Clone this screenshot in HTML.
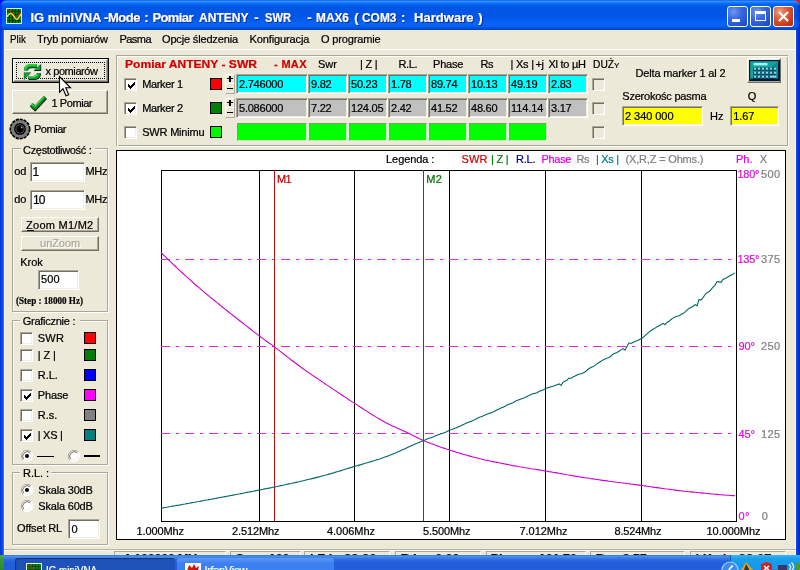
<!DOCTYPE html>
<html lang="pl"><head><meta charset="utf-8"><title>IG miniVNA</title>
<style>
html,body{margin:0;padding:0;}
body{width:800px;height:570px;overflow:hidden;background:#ECE9D8;position:relative;font-family:"Liberation Sans",sans-serif;font-size:11px;}
#root{position:absolute;left:0;top:0;width:800px;height:570px;overflow:hidden;will-change:transform;}
#root div{position:absolute;}
.t{position:absolute;white-space:pre;line-height:1;-webkit-text-stroke:0.22px currentColor;}
.serif{font-family:"Liberation Serif",serif;}
.ttl{text-shadow:1px 1px 0 #0a2a90;}
.dis{text-shadow:1px 1px 0 #fff;}
#tb{left:0;top:0;width:800px;height:30px;border-radius:7px 7px 0 0;
background:linear-gradient(to bottom,#0058ee 0%,#3a90ff 4%,#2484ff 7%,#0c70fc 11%,#0460ee 16%,#0256e4 24%,#0255e6 55%,#045cf2 68%,#0666fa 80%,#0460ee 88%,#0250d8 94%,#0240b8 100%);}
#bl{left:0;top:30px;width:4px;height:540px;background:linear-gradient(to right,#0430d8,#0a4ae8 60%,#3a7cf0);}
#br{left:796px;top:30px;width:4px;height:540px;background:linear-gradient(to right,#0a4ae8,#0430d0 70%,#022aa8);}
#corner{left:792px;top:0;width:8px;height:8px;background:#d02020;z-index:-1;}
#cornl{left:0;top:0;width:8px;height:8px;background:#0010f0;z-index:-1;}
#tbr{left:796px;top:5px;width:4px;height:25px;background:linear-gradient(to right,rgba(0,20,150,0),rgba(0,20,150,.55));}
#tbl{left:0;top:5px;width:2px;height:25px;background:rgba(0,10,255,.45);}
.wb{width:19px;height:19px;border:1px solid #fff;border-radius:3px;}
.sunk{box-sizing:border-box;border:1px solid;border-color:#aca899 #fff #fff #aca899;box-shadow:inset 1px 1px 0 #716f64,inset -1px -1px 0 #f1efe2;}
.btn{box-sizing:border-box;background:#ECE9D8;border:1px solid;border-color:#fff #716f64 #716f64 #fff;box-shadow:inset -1px -1px 0 #aca899;}
.grp{box-sizing:border-box;border:1px solid #aca899;box-shadow:1px 1px 0 #fff,inset 1px 1px 0 #fff;}
.pnl{box-sizing:border-box;border:1px solid;border-color:#aca899 #fff #fff #aca899;box-shadow:inset 1px 1px 0 #fff,inset -1px -1px 0 #aca899;}
.sbp{box-sizing:border-box;border:1px solid;border-color:#aca899 #fff #fff #aca899;}
#task{left:0;top:555px;width:800px;height:15px;background:linear-gradient(to bottom,#3168d5 0,#4993e6 1px,#3c7ee8 3px,#2c68de 5px,#245edb 8px,#245edb 100%);}
</style></head><body><div id="root">
<div id="tb"></div>
<div id="bl"></div><div id="br"></div><div id="tbr"></div><div id="tbl"></div>
<div id="corner"></div><div id="cornl"></div>
<svg style="position:absolute;left:6px;top:8px" width="16" height="16" viewBox="0 0 16 16">
<rect x="0" y="0" width="16" height="16" fill="#c8f4e8"/>
<rect x="1" y="1" width="14" height="14" fill="#088a08"/>
<path d="M3.5 1V15M6.5 1V15M9.5 1V15M12.5 1V15M1 3.5H15M1 6.5H15M1 9.5H15M1 12.5H15" stroke="#023802" stroke-width="1.2" fill="none"/>
<path d="M1.5 2 C4 2.5 6 4 8 7 C9.5 9.5 10.5 10 11.5 8.5 C12.5 7 13.5 5 14.5 3.5" stroke="#7a3a10" stroke-width="1.6" fill="none"/>
<path d="M1 9 C2.5 5.5 5 4.5 7 7 C8.5 9 9.5 12 11 11.5 C12.5 11 13.5 8 15 6" stroke="#e8e030" stroke-width="1.5" fill="none"/>
</svg>
<div class="wb" style="left:727px;top:6px;background:radial-gradient(circle at 30% 25%,#6a98f0 0%,#3a68e0 40%,#2450d0 80%,#1a3cb0 100%);"><div style="left:4px;top:12px;width:8px;height:3px;background:#fff"></div></div>
<div class="wb" style="left:750px;top:6px;background:radial-gradient(circle at 30% 25%,#6a98f0 0%,#3a68e0 40%,#2450d0 80%,#1a3cb0 100%);"><div style="left:4px;top:4px;width:11px;height:10px;border:1px solid #fff;border-top:3px solid #fff;box-sizing:border-box"></div></div>
<div class="wb" style="left:773px;top:6px;background:radial-gradient(circle at 30% 25%,#f0a080 0%,#e0603a 35%,#c83818 75%,#a82808 100%);"><svg width="21" height="21" viewBox="0 0 21 21" style="position:absolute;left:-1px;top:-1px"><path d="M6 6L15 15M15 6L6 15" stroke="#fff" stroke-width="2.3" stroke-linecap="butt"/></svg></div>
<div class="" style="left:4px;top:30px;width:792px;height:525px;background:#ECE9D8;"></div>
<div class="" style="left:4px;top:49px;width:792px;height:1px;background:#fff;"></div>
<div class="" style="left:4px;top:30px;width:1px;height:525px;background:#f8f7f0;"></div>
<div class="" style="left:795px;top:30px;width:1px;height:525px;background:#fbfaf4;"></div>
<div class="" style="left:12px;top:58px;width:97px;height:25px;background:#000;"></div>
<div class="btn" style="left:13px;top:59px;width:95px;height:23px;"></div>
<div class="" style="left:16px;top:62px;width:89px;height:17px;border:1px dotted #000;box-sizing:border-box;"></div>
<svg style="position:absolute;left:23px;top:63px" width="19" height="18" viewBox="0 0 19 18">
<g fill="none" stroke="#06283a" stroke-width="4.2"><path d="M3 7.6 C3 4 5.2 3.2 8.5 3.2 L14 3.2"/><path d="M16 10.2 C16 14 13.6 15 10.4 15 L5.5 15"/></g>
<path d="M10.6 7.9 L18.2 7.9 L18.2 0.9 Z" fill="#06283a"/><path d="M8.2 9.6 L0.9 9.6 L0.9 16.9 Z" fill="#06283a"/>
<g fill="none" stroke="#12a622" stroke-width="3.2"><path d="M2.6 7.2 C2.6 3.6 4.8 2.7 8.2 2.7 L14 2.7"/><path d="M15.6 9.9 C15.6 13.6 13.2 14.5 10 14.5 L5.5 14.5"/></g>
<path d="M11.2 7 L17.4 7 L17.4 1.2 Z" fill="#12a622"/><path d="M7.4 9.9 L1.2 9.9 L1.2 16 Z" fill="#12a622"/>
<g fill="none" stroke="#3fe050" stroke-width="1.1"><path d="M2 7 C2 3 4.4 1.9 8 1.9 L13.6 1.9"/><path d="M14.4 11.8 C13.8 13.2 12 13.6 10 13.6 L6.4 13.6"/></g>
</svg>
<div class="btn" style="left:12px;top:90px;width:96px;height:24px;"></div>
<svg style="position:absolute;left:29px;top:94px" width="19" height="18" viewBox="0 0 19 18">
<path d="M2.5 10.9 L6.1 14.6 L16.4 3.4" fill="none" stroke="#03240a" stroke-width="4.4" stroke-linejoin="miter"/>
<path d="M2.2 10.4 L5.9 14 L16 2.9" fill="none" stroke="#0f8e20" stroke-width="3.3" stroke-linejoin="miter"/>
<path d="M1.9 9.6 L5.8 12.6 L15 2.6" fill="none" stroke="#48e458" stroke-width="1.1" stroke-linejoin="miter"/>
</svg>
<svg style="position:absolute;left:9px;top:118px" width="22" height="22" viewBox="0 0 22 22">
<circle cx="11" cy="11" r="9.7" fill="#7c7c7c" stroke="#000" stroke-width="1.6" stroke-dasharray="3.2 0.9"/>
<circle cx="11" cy="11" r="5.9" fill="#000"/>
<circle cx="11" cy="11" r="4.5" fill="#6a6a6a"/>
<circle cx="11" cy="11" r="3.7" fill="#000"/>
<circle cx="12.8" cy="9.4" r="0.9" fill="#b0b0b0"/>
</svg>
<div class="grp" style="left:12px;top:148px;width:96px;height:164px;"></div><div class="" style="left:21px;top:147px;width:74px;height:4px;background:#ECE9D8;"></div>
<div class="sunk" style="left:30px;top:162px;width:55px;height:20px;background:#fff;"></div>
<div class="sunk" style="left:30px;top:190px;width:55px;height:20px;background:#fff;"></div>
<div class="btn" style="left:21px;top:217px;width:78px;height:15px;"></div>
<div class="" style="left:27px;top:230px;width:7px;height:1px;background:#000;"></div>
<div class="btn" style="left:21px;top:236px;width:78px;height:15px;"></div>
<div class="sunk" style="left:38px;top:270px;width:41px;height:20px;background:#fff;"></div>
<div class="grp" style="left:12px;top:320px;width:96px;height:145px;"></div><div class="" style="left:20px;top:319px;width:60px;height:4px;background:#ECE9D8;"></div>
<div class="sunk" style="left:20px;top:332px;width:13px;height:13px;background:#fff;"></div>
<div class="" style="left:84px;top:332px;width:12px;height:12px;background:#ff0000;border:1px solid #000;box-sizing:border-box;"></div>
<div class="sunk" style="left:20px;top:349px;width:13px;height:13px;background:#fff;"></div>
<div class="" style="left:84px;top:349px;width:12px;height:12px;background:#008000;border:1px solid #000;box-sizing:border-box;"></div>
<div class="sunk" style="left:20px;top:369px;width:13px;height:13px;background:#fff;"></div>
<div class="" style="left:84px;top:369px;width:12px;height:12px;background:#0000ff;border:1px solid #000;box-sizing:border-box;"></div>
<div class="sunk" style="left:20px;top:389px;width:13px;height:13px;background:#fff;"><svg width="13" height="13" viewBox="0 0 13 13" style="position:absolute;left:0;top:0"><path shape-rendering="crispEdges" d="M3 5h1v3h-1zM4 6h1v3h-1zM5 7h1v3h-1zM6 6h1v3h-1zM7 5h1v3h-1zM8 4h1v3h-1zM9 3h1v3h-1z" fill="#000"/></svg></div>
<div class="" style="left:84px;top:389px;width:12px;height:12px;background:#ff00ff;border:1px solid #000;box-sizing:border-box;"></div>
<div class="sunk" style="left:20px;top:409px;width:13px;height:13px;background:#fff;"></div>
<div class="" style="left:84px;top:409px;width:12px;height:12px;background:#808080;border:1px solid #000;box-sizing:border-box;"></div>
<div class="sunk" style="left:20px;top:429px;width:13px;height:13px;background:#fff;"><svg width="13" height="13" viewBox="0 0 13 13" style="position:absolute;left:0;top:0"><path shape-rendering="crispEdges" d="M3 5h1v3h-1zM4 6h1v3h-1zM5 7h1v3h-1zM6 6h1v3h-1zM7 5h1v3h-1zM8 4h1v3h-1zM9 3h1v3h-1z" fill="#000"/></svg></div>
<div class="" style="left:84px;top:429px;width:12px;height:12px;background:#008080;border:1px solid #000;box-sizing:border-box;"></div>
<svg style="position:absolute;left:21px;top:450px" width="12" height="12" viewBox="0 0 12 12"><circle cx="6" cy="6" r="5.5" fill="#fff"/><path d="M1.9 10.1 A5.8 5.8 0 0 1 10.1 1.9" fill="none" stroke="#aca899" stroke-width="1"/><path d="M2.7 9.3 A4.7 4.7 0 0 1 9.3 2.7" fill="none" stroke="#716f64" stroke-width="1"/><path d="M10.1 1.9 A5.8 5.8 0 0 1 1.9 10.1" fill="none" stroke="#fff" stroke-width="1"/><path d="M9.3 2.7 A4.7 4.7 0 0 1 2.7 9.3" fill="none" stroke="#f1efe2" stroke-width="1"/><circle cx="6" cy="6" r="2" fill="#000"/></svg>
<div class="" style="left:37px;top:456px;width:17px;height:1px;background:#000;"></div>
<svg style="position:absolute;left:68px;top:450px" width="12" height="12" viewBox="0 0 12 12"><circle cx="6" cy="6" r="5.5" fill="#fff"/><path d="M1.9 10.1 A5.8 5.8 0 0 1 10.1 1.9" fill="none" stroke="#aca899" stroke-width="1"/><path d="M2.7 9.3 A4.7 4.7 0 0 1 9.3 2.7" fill="none" stroke="#716f64" stroke-width="1"/><path d="M10.1 1.9 A5.8 5.8 0 0 1 1.9 10.1" fill="none" stroke="#fff" stroke-width="1"/><path d="M9.3 2.7 A4.7 4.7 0 0 1 2.7 9.3" fill="none" stroke="#f1efe2" stroke-width="1"/></svg>
<div class="" style="left:84px;top:455px;width:16px;height:2px;background:#000;"></div>
<div class="grp" style="left:12px;top:472px;width:96px;height:73px;"></div><div class="" style="left:20px;top:471px;width:31px;height:4px;background:#ECE9D8;"></div>
<svg style="position:absolute;left:21px;top:484px" width="12" height="12" viewBox="0 0 12 12"><circle cx="6" cy="6" r="5.5" fill="#fff"/><path d="M1.9 10.1 A5.8 5.8 0 0 1 10.1 1.9" fill="none" stroke="#aca899" stroke-width="1"/><path d="M2.7 9.3 A4.7 4.7 0 0 1 9.3 2.7" fill="none" stroke="#716f64" stroke-width="1"/><path d="M10.1 1.9 A5.8 5.8 0 0 1 1.9 10.1" fill="none" stroke="#fff" stroke-width="1"/><path d="M9.3 2.7 A4.7 4.7 0 0 1 2.7 9.3" fill="none" stroke="#f1efe2" stroke-width="1"/><circle cx="6" cy="6" r="2" fill="#000"/></svg>
<svg style="position:absolute;left:21px;top:500px" width="12" height="12" viewBox="0 0 12 12"><circle cx="6" cy="6" r="5.5" fill="#fff"/><path d="M1.9 10.1 A5.8 5.8 0 0 1 10.1 1.9" fill="none" stroke="#aca899" stroke-width="1"/><path d="M2.7 9.3 A4.7 4.7 0 0 1 9.3 2.7" fill="none" stroke="#716f64" stroke-width="1"/><path d="M10.1 1.9 A5.8 5.8 0 0 1 1.9 10.1" fill="none" stroke="#fff" stroke-width="1"/><path d="M9.3 2.7 A4.7 4.7 0 0 1 2.7 9.3" fill="none" stroke="#f1efe2" stroke-width="1"/></svg>
<div class="sunk" style="left:68px;top:519px;width:32px;height:20px;background:#fff;"></div>
<div class="pnl" style="left:116px;top:55px;width:673px;height:92px;"></div>
<div class="sunk" style="left:124px;top:78px;width:13px;height:13px;background:#fff;"><svg width="13" height="13" viewBox="0 0 13 13" style="position:absolute;left:0;top:0"><path shape-rendering="crispEdges" d="M3 5h1v3h-1zM4 6h1v3h-1zM5 7h1v3h-1zM6 6h1v3h-1zM7 5h1v3h-1zM8 4h1v3h-1zM9 3h1v3h-1z" fill="#000"/></svg></div>
<div class="" style="left:210px;top:78px;width:12px;height:12px;background:#ff0000;border:1px solid #000;box-sizing:border-box;"></div>
<div class="btn" style="left:225px;top:74px;width:10px;height:10px;border-color:#fff #aca899 #aca899 #fff;box-shadow:none;"></div>
<div class="btn" style="left:225px;top:83px;width:10px;height:11px;border-color:#fff #aca899 #aca899 #fff;box-shadow:none;"></div>
<div class="" style="left:227px;top:78px;width:6px;height:1.2999999999999972px;background:#000;"></div>
<div class="" style="left:229.3px;top:76px;width:1.3999999999999773px;height:5.5px;background:#000;"></div>
<div class="" style="left:227px;top:88px;width:6px;height:1.4000000000000057px;background:#000;"></div>
<div class="sunk" style="left:236px;top:74px;width:72px;height:20px;background:#00ffff;"></div>
<div class="sunk" style="left:308px;top:74px;width:40px;height:20px;background:#00ffff;"></div>
<div class="sunk" style="left:348px;top:74px;width:40px;height:20px;background:#00ffff;"></div>
<div class="sunk" style="left:388px;top:74px;width:40px;height:20px;background:#00ffff;"></div>
<div class="sunk" style="left:428px;top:74px;width:40px;height:20px;background:#00ffff;"></div>
<div class="sunk" style="left:468px;top:74px;width:40px;height:20px;background:#00ffff;"></div>
<div class="sunk" style="left:508px;top:74px;width:40px;height:20px;background:#00ffff;"></div>
<div class="sunk" style="left:548px;top:74px;width:40px;height:20px;background:#00ffff;"></div>
<div class="sunk" style="left:592px;top:78px;width:13px;height:13px;background:#ECE9D8;"></div>
<div class="sunk" style="left:124px;top:102px;width:13px;height:13px;background:#fff;"><svg width="13" height="13" viewBox="0 0 13 13" style="position:absolute;left:0;top:0"><path shape-rendering="crispEdges" d="M3 5h1v3h-1zM4 6h1v3h-1zM5 7h1v3h-1zM6 6h1v3h-1zM7 5h1v3h-1zM8 4h1v3h-1zM9 3h1v3h-1z" fill="#000"/></svg></div>
<div class="" style="left:210px;top:102px;width:12px;height:12px;background:#008000;border:1px solid #000;box-sizing:border-box;"></div>
<div class="btn" style="left:225px;top:98px;width:10px;height:10px;border-color:#fff #aca899 #aca899 #fff;box-shadow:none;"></div>
<div class="btn" style="left:225px;top:107px;width:10px;height:11px;border-color:#fff #aca899 #aca899 #fff;box-shadow:none;"></div>
<div class="" style="left:227px;top:102px;width:6px;height:1.2999999999999972px;background:#000;"></div>
<div class="" style="left:229.3px;top:100px;width:1.3999999999999773px;height:5.5px;background:#000;"></div>
<div class="" style="left:227px;top:112px;width:6px;height:1.4000000000000057px;background:#000;"></div>
<div class="sunk" style="left:236px;top:98px;width:72px;height:20px;background:#c0c0c0;"></div>
<div class="sunk" style="left:308px;top:98px;width:40px;height:20px;background:#c0c0c0;"></div>
<div class="sunk" style="left:348px;top:98px;width:40px;height:20px;background:#c0c0c0;"></div>
<div class="sunk" style="left:388px;top:98px;width:40px;height:20px;background:#c0c0c0;"></div>
<div class="sunk" style="left:428px;top:98px;width:40px;height:20px;background:#c0c0c0;"></div>
<div class="sunk" style="left:468px;top:98px;width:40px;height:20px;background:#c0c0c0;"></div>
<div class="sunk" style="left:508px;top:98px;width:40px;height:20px;background:#c0c0c0;"></div>
<div class="sunk" style="left:548px;top:98px;width:40px;height:20px;background:#c0c0c0;"></div>
<div class="sunk" style="left:592px;top:102px;width:13px;height:13px;background:#ECE9D8;"></div>
<div class="sunk" style="left:124px;top:126px;width:13px;height:13px;background:#fff;"></div>
<div class="" style="left:210px;top:126px;width:12px;height:12px;background:#00f800;border:1px solid #000;box-sizing:border-box;"></div>
<div class="" style="left:237px;top:123px;width:70px;height:18px;background:#00ff00;border:1px solid;border-color:#7aa070 #c8f0c0 #c8f0c0 #7aa070;box-sizing:border-box;"></div>
<div class="" style="left:309px;top:123px;width:38px;height:18px;background:#00ff00;border:1px solid;border-color:#7aa070 #c8f0c0 #c8f0c0 #7aa070;box-sizing:border-box;"></div>
<div class="" style="left:349px;top:123px;width:38px;height:18px;background:#00ff00;border:1px solid;border-color:#7aa070 #c8f0c0 #c8f0c0 #7aa070;box-sizing:border-box;"></div>
<div class="" style="left:389px;top:123px;width:38px;height:18px;background:#00ff00;border:1px solid;border-color:#7aa070 #c8f0c0 #c8f0c0 #7aa070;box-sizing:border-box;"></div>
<div class="" style="left:429px;top:123px;width:38px;height:18px;background:#00ff00;border:1px solid;border-color:#7aa070 #c8f0c0 #c8f0c0 #7aa070;box-sizing:border-box;"></div>
<div class="" style="left:469px;top:123px;width:38px;height:18px;background:#00ff00;border:1px solid;border-color:#7aa070 #c8f0c0 #c8f0c0 #7aa070;box-sizing:border-box;"></div>
<div class="" style="left:509px;top:123px;width:38px;height:18px;background:#00ff00;border:1px solid;border-color:#7aa070 #c8f0c0 #c8f0c0 #7aa070;box-sizing:border-box;"></div>
<div class="sunk" style="left:592px;top:126px;width:13px;height:13px;background:#ECE9D8;"></div>
<div class="sunk" style="left:622px;top:106px;width:81px;height:20px;background:#ffff00;"></div>
<div class="sunk" style="left:730px;top:106px;width:49px;height:20px;background:#ffff00;"></div>
<div class="btn" style="left:747px;top:58px;width:34px;height:25px;"></div>
<svg style="position:absolute;left:749px;top:60px" width="31" height="21" viewBox="0 0 31 21">
<rect x="0.5" y="0.5" width="30" height="20" fill="#10a69c" stroke="#021838" stroke-width="1.4"/>
<path d="M30 1 L30 20 L4 20 Z" fill="#0c7484" opacity="0.55"/>
<path d="M1.5 19.2H30M29.8 1.5V20" stroke="#021838" stroke-width="1.4" fill="none"/>
<rect x="4.5" y="3" width="14" height="2.4" fill="#a8f0f0"/>
<g fill="#02283c"><rect x="4.2" y="7.6" width="22.6" height="3.2"/><rect x="4.2" y="11.6" width="22.6" height="3.2"/><rect x="4.2" y="15.6" width="22.6" height="3.2"/></g>
<g fill="#88d0f0">
<rect x="5" y="7.6" width="2.2" height="2.2"/><rect x="9" y="7.6" width="2.2" height="2.2"/><rect x="13" y="7.6" width="2.2" height="2.2"/><rect x="17" y="7.6" width="2.2" height="2.2"/><rect x="21" y="7.6" width="2.2" height="2.2"/><rect x="25" y="7.6" width="2.2" height="2.2"/>
<rect x="5" y="11.6" width="2.2" height="2.2"/><rect x="9" y="11.6" width="2.2" height="2.2"/><rect x="13" y="11.6" width="2.2" height="2.2"/><rect x="17" y="11.6" width="2.2" height="2.2"/><rect x="21" y="11.6" width="2.2" height="2.2"/><rect x="25" y="11.6" width="2.2" height="2.2"/>
<rect x="5" y="15.6" width="2.2" height="2.2"/><rect x="9" y="15.6" width="2.2" height="2.2"/><rect x="13" y="15.6" width="2.2" height="2.2"/><rect x="17" y="15.6" width="2.2" height="2.2"/><rect x="21" y="15.6" width="6.2" height="2.2"/>
</g>
<g fill="#0c6c78"><rect x="7.2" y="7.6" width="1.8" height="3.2"/><rect x="11.2" y="7.6" width="1.8" height="3.2"/><rect x="15.2" y="7.6" width="1.8" height="3.2"/><rect x="19.2" y="7.6" width="1.8" height="3.2"/><rect x="23.2" y="7.6" width="1.8" height="3.2"/>
<rect x="7.2" y="11.6" width="1.8" height="3.2"/><rect x="11.2" y="11.6" width="1.8" height="3.2"/><rect x="15.2" y="11.6" width="1.8" height="3.2"/><rect x="19.2" y="11.6" width="1.8" height="3.2"/><rect x="23.2" y="11.6" width="1.8" height="3.2"/>
<rect x="7.2" y="15.6" width="1.8" height="3.2"/><rect x="11.2" y="15.6" width="1.8" height="3.2"/><rect x="15.2" y="15.6" width="1.8" height="3.2"/><rect x="19.2" y="15.6" width="1.8" height="3.2"/></g>
</svg>
<svg style="position:absolute;left:116px;top:150px" width="670" height="390" viewBox="0 0 670 390">
<rect x="0.5" y="0.5" width="669" height="389" fill="#fff" stroke="#000" stroke-width="1"/>
<g shape-rendering="crispEdges" fill="none">
<rect x="45.5" y="20.5" width="575" height="351" stroke="#000" stroke-width="1"/>
<path d="M143.5 20V371" stroke="#000" stroke-width="1"/>
<path d="M238.5 20V371" stroke="#000" stroke-width="1"/>
<path d="M333.5 20V371" stroke="#000" stroke-width="1"/>
<path d="M429.5 20V371" stroke="#000" stroke-width="1"/>
<path d="M525.5 20V371" stroke="#000" stroke-width="1"/>
<path d="M45 109.5H620" stroke="#e424e4" stroke-width="1" stroke-dasharray="9 6 3 6"/>
<path d="M45 196.5H620" stroke="#e424e4" stroke-width="1" stroke-dasharray="9 6 3 6"/>
<path d="M45 283.5H620" stroke="#e424e4" stroke-width="1" stroke-dasharray="9 6 3 6"/>
<path d="M158.5 20V371" stroke="#b81010" stroke-width="1"/>
<path d="M307.5 20V371" stroke="#007800" stroke-width="1"/>
</g>
<polyline points="45.0,102.5 47.0,104.5 49.0,106.4 51.0,108.4 53.0,110.3 55.0,112.2 57.0,114.2 59.0,116.0 61.0,117.9 63.0,119.8 65.0,121.7 67.0,123.5 69.0,125.3 71.0,127.1 73.0,128.9 75.0,130.7 77.0,132.5 79.0,134.3 81.0,136.0 83.0,137.7 85.0,139.4 87.0,141.1 89.0,142.8 91.0,144.5 93.0,146.1 95.0,147.8 97.0,149.4 99.0,151.0 101.0,152.6 103.0,154.2 105.0,155.8 107.0,157.5 109.0,159.1 111.0,160.7 113.0,162.3 115.0,163.9 117.0,165.5 119.0,167.0 121.0,168.6 123.0,170.2 125.0,171.8 127.0,173.3 129.0,174.9 131.0,176.4 133.0,178.0 135.0,179.5 137.0,181.1 139.0,182.6 141.0,184.1 143.0,185.6 145.0,187.1 147.0,188.6 149.0,190.1 151.0,191.5 153.0,193.0 155.0,194.4 157.0,195.9 159.0,197.4 161.0,198.9 163.0,200.4 165.0,201.9 167.0,203.5 169.0,205.0 171.0,206.6 173.0,208.1 175.0,209.7 177.0,211.2 179.0,212.8 181.0,214.3 183.0,215.8 185.0,217.3 187.0,218.7 189.0,220.1 191.0,221.5 193.0,222.9 195.0,224.3 197.0,225.6 199.0,227.0 201.0,228.3 203.0,229.6 205.0,231.0 207.0,232.4 209.0,233.7 211.0,235.1 213.0,236.4 215.0,237.8 217.0,239.1 219.0,240.4 221.0,241.8 223.0,243.1 225.0,244.5 227.0,245.8 229.0,247.1 231.0,248.4 233.0,249.8 235.0,251.1 237.0,252.4 239.0,253.6 241.0,254.9 243.0,256.2 245.0,257.5 247.0,258.8 249.0,260.1 251.0,261.4 253.0,262.7 255.0,263.9 257.0,265.2 259.0,266.4 261.0,267.6 263.0,268.8 265.0,270.0 267.0,271.1 269.0,272.2 271.0,273.2 273.0,274.2 275.0,275.2 277.0,276.2 279.0,277.1 281.0,278.0 283.0,278.9 285.0,279.8 287.0,280.7 289.0,281.6 291.0,282.5 293.0,283.5 295.0,284.5 297.0,285.5 299.0,286.5 301.0,287.5 303.0,288.5 305.0,289.4 307.0,290.3 309.0,291.2 311.0,292.0 313.0,292.8 315.0,293.6 317.0,294.3 319.0,295.1 321.0,295.8 323.0,296.5 325.0,297.2 327.0,297.9 329.0,298.5 331.0,299.2 333.0,299.8 335.0,300.5 337.0,301.1 339.0,301.7 341.0,302.4 343.0,303.0 345.0,303.6 347.0,304.2 349.0,304.7 351.0,305.3 353.0,305.9 355.0,306.4 357.0,307.0 359.0,307.5 361.0,308.0 363.0,308.5 365.0,309.0 367.0,309.5 369.0,310.0 371.0,310.4 373.0,310.8 375.0,311.2 377.0,311.6 379.0,312.0 381.0,312.4 383.0,312.8 385.0,313.2 387.0,313.6 389.0,314.0 391.0,314.4 393.0,314.8 395.0,315.2 397.0,315.6 399.0,315.9 401.0,316.3 403.0,316.7 405.0,317.0 407.0,317.3 409.0,317.7 411.0,318.0 413.0,318.3 415.0,318.7 417.0,319.0 419.0,319.3 421.0,319.6 423.0,319.9 425.0,320.2 427.0,320.6 429.0,320.9 431.0,321.2 433.0,321.6 435.0,321.9 437.0,322.3 439.0,322.6 441.0,322.9 443.0,323.3 445.0,323.6 447.0,324.0 449.0,324.3 451.0,324.7 453.0,325.0 455.0,325.4 457.0,325.7 459.0,326.1 461.0,326.4 463.0,326.7 465.0,327.1 467.0,327.4 469.0,327.7 471.0,328.0 473.0,328.3 475.0,328.7 477.0,328.9 479.0,329.2 481.0,329.5 483.0,329.8 485.0,330.1 487.0,330.4 489.0,330.6 491.0,330.9 493.0,331.2 495.0,331.5 497.0,331.7 499.0,332.0 501.0,332.3 503.0,332.5 505.0,332.8 507.0,333.0 509.0,333.3 511.0,333.6 513.0,333.8 515.0,334.1 517.0,334.3 519.0,334.6 521.0,334.9 523.0,335.1 525.0,335.4 527.0,335.7 529.0,335.9 531.0,336.2 533.0,336.5 535.0,336.8 537.0,337.1 539.0,337.4 541.0,337.6 543.0,337.9 545.0,338.2 547.0,338.5 549.0,338.8 551.0,339.0 553.0,339.3 555.0,339.6 557.0,339.8 559.0,340.1 561.0,340.4 563.0,340.6 565.0,340.8 567.0,341.1 569.0,341.3 571.0,341.5 573.0,341.7 575.0,341.9 577.0,342.1 579.0,342.3 581.0,342.5 583.0,342.7 585.0,342.9 587.0,343.1 589.0,343.3 591.0,343.5 593.0,343.7 595.0,343.9 597.0,344.0 599.0,344.2 601.0,344.4 603.0,344.6 605.0,344.7 607.0,344.9 609.0,345.0 611.0,345.2 613.0,345.3 615.0,345.5 617.0,345.6 619.0,345.7" fill="none" stroke="#cc00cc" stroke-width="1.1"/>
<polyline points="45.0,358.2 47.0,357.9 49.0,357.5 51.0,357.2 53.0,356.8 55.0,356.5 57.0,356.1 59.0,355.8 61.0,355.4 63.0,355.1 65.0,354.7 67.0,354.3 69.0,354.0 71.0,353.6 73.0,353.3 75.0,352.9 77.0,352.5 79.0,352.2 81.0,351.8 83.0,351.5 85.0,351.1 87.0,350.7 89.0,350.3 91.0,350.0 93.0,349.6 95.0,349.2 97.0,348.9 99.0,348.5 101.0,348.1 103.0,347.7 105.0,347.4 107.0,347.0 109.0,346.6 111.0,346.2 113.0,345.9 115.0,345.5 117.0,345.1 119.0,344.7 121.0,344.3 123.0,344.0 125.0,343.6 127.0,343.2 129.0,342.8 131.0,342.4 133.0,342.0 135.0,341.6 137.0,341.3 139.0,340.9 141.0,340.5 143.0,340.1 145.0,339.7 147.0,339.3 149.0,338.9 151.0,338.5 153.0,338.1 155.0,337.7 157.0,337.3 159.0,336.9 161.0,336.5 163.0,336.0 165.0,335.6 167.0,335.2 169.0,334.8 171.0,334.3 173.0,333.9 175.0,333.5 177.0,333.0 179.0,332.6 181.0,332.1 183.0,331.7 185.0,331.2 187.0,330.8 189.0,330.3 191.0,329.8 193.0,329.3 195.0,328.9 197.0,328.4 199.0,327.9 201.0,327.4 203.0,326.9 205.0,326.3 207.0,325.8 209.0,325.3 211.0,324.7 213.0,324.1 215.0,323.6 217.0,323.0 219.0,322.4 221.0,321.8 223.0,321.2 225.0,320.6 227.0,320.0 229.0,319.3 231.0,318.7 233.0,318.1 235.0,317.5 237.0,316.9 239.0,316.3 241.0,315.7 243.0,315.1 245.0,314.6 247.0,313.9 249.0,313.3 251.0,312.8 253.0,312.2 255.0,311.6 257.0,311.0 259.0,310.5 261.0,309.8 263.0,309.2 265.0,308.5 267.0,307.7 269.0,307.0 271.0,306.4 273.0,305.6 275.0,304.8 277.0,304.0 279.0,303.2 281.0,302.3 283.0,301.4 285.0,300.4 287.0,299.6 289.0,298.8 291.0,297.8 293.0,296.8 295.0,295.9 297.0,295.0 299.0,294.1 301.0,293.3 303.0,292.4 305.0,291.5 307.0,290.7 309.0,289.9 311.0,289.0 313.0,288.3 315.0,287.7 317.0,286.9 319.0,286.1 321.0,285.2 323.0,284.4 325.0,283.7 327.0,283.1 329.0,282.4 331.0,281.5 333.0,280.5 335.0,279.8 337.0,279.1 339.0,278.3 341.0,277.4 343.0,276.6 345.0,275.8 347.0,274.7 349.0,273.8 351.0,272.8 353.0,272.0 355.0,271.4 357.0,270.5 359.0,269.5 361.0,268.4 363.0,267.5 365.0,266.8 367.0,265.9 369.0,265.1 371.0,264.2 373.0,263.5 375.0,262.9 377.0,262.1 379.0,261.1 381.0,260.0 383.0,259.1 385.0,258.1 387.0,257.2 389.0,256.2 391.0,255.1 393.0,254.3 395.0,253.5 397.0,252.7 399.0,251.6 401.0,250.6 403.0,249.7 405.0,248.9 407.0,248.3 409.0,247.5 411.0,246.6 413.0,245.6 415.0,244.5 417.0,243.7 419.0,243.4 421.0,242.8 423.0,241.6 425.0,240.7 427.0,239.9 429.0,238.8 431.0,237.9 433.0,237.4 435.0,236.8 437.0,236.2 439.0,235.6 441.0,234.7 443.0,233.9 445.0,235.5 447.0,232.4 449.0,231.0 451.0,230.2 453.0,228.0 455.0,228.2 457.0,227.1 459.0,226.1 461.0,225.0 463.0,224.2 465.0,223.7 467.0,223.1 469.0,222.0 471.0,220.2 473.0,218.5 475.0,217.5 477.0,216.6 479.0,215.4 481.0,213.9 483.0,212.5 485.0,211.3 487.0,209.9 489.0,208.9 491.0,208.3 493.0,207.4 495.0,206.0 497.0,204.2 499.0,203.3 501.0,202.5 503.0,201.2 505.0,199.9 507.0,198.6 509.0,200.1 511.0,196.4 513.0,192.8 515.0,193.5 517.0,192.5 519.0,191.5 521.0,190.8 523.0,189.8 525.0,188.8 527.0,187.5 529.0,185.7 531.0,183.8 533.0,182.1 535.0,180.5 537.0,179.3 539.0,178.1 541.0,176.8 543.0,175.7 545.0,174.7 547.0,173.4 549.0,174.7 551.0,172.4 553.0,171.3 555.0,169.5 557.0,168.1 559.0,167.1 561.0,166.3 563.0,165.7 565.0,164.6 567.0,163.6 569.0,162.2 571.0,160.1 573.0,158.4 575.0,157.4 577.0,156.2 579.0,154.6 581.0,155.8 583.0,149.5 585.0,150.1 587.0,147.6 589.0,144.8 591.0,142.7 593.0,141.7 595.0,139.7 597.0,137.1 599.0,135.3 601.0,131.5 603.0,131.9 605.0,132.3 607.0,129.5 609.0,128.4 611.0,127.5 613.0,126.3 615.0,125.2 617.0,124.1 619.0,122.9" fill="none" stroke="#006666" stroke-width="1.1"/>
</svg>
<div class="" style="left:4px;top:549px;width:792px;height:1px;background:#b8b4a4;"></div>
<div class="" style="left:4px;top:550px;width:792px;height:1px;background:#f8f6ee;"></div>
<div class="sbp" style="left:114px;top:551px;width:112px;height:22px;"></div>
<div class="sbp" style="left:229.5px;top:551px;width:71.5px;height:22px;"></div>
<div class="sbp" style="left:304px;top:551px;width:86px;height:22px;"></div>
<div class="sbp" style="left:395px;top:551px;width:86px;height:22px;"></div>
<div class="sbp" style="left:486px;top:551px;width:100px;height:22px;"></div>
<div class="sbp" style="left:590px;top:551px;width:95px;height:22px;"></div>
<div class="sbp" style="left:690px;top:551px;width:96px;height:22px;"></div>
<span class="t ttl" id="t0" style="left:30.5px;top:11px;font-size:13px;font-weight:bold;color:#fff;letter-spacing:-0.06px;">IG miniVNA</span>
<span class="t ttl" id="t1" style="left:104.0px;top:11px;font-size:13px;font-weight:bold;color:#fff;letter-spacing:-0.45px;">-Mode</span>
<span class="t ttl" id="t2" style="left:144.3px;top:11px;font-size:13px;font-weight:bold;color:#fff;">:</span>
<span class="t ttl" id="t3" style="left:152.5px;top:11px;font-size:13px;font-weight:bold;color:#fff;letter-spacing:-0.62px;">Pomiar</span>
<span class="t ttl" id="t4" style="left:199.0px;top:11px;font-size:13px;font-weight:bold;color:#fff;transform:scaleX(0.926);transform-origin:0 0;">ANTENY</span>
<span class="t ttl" id="t5" style="left:254.3px;top:11px;font-size:13px;font-weight:bold;color:#fff;">-</span>
<span class="t ttl" id="t6" style="left:264.5px;top:11px;font-size:13px;font-weight:bold;color:#fff;transform:scaleX(0.857);transform-origin:0 0;">SWR</span>
<span class="t ttl" id="t7" style="left:307.3px;top:11px;font-size:13px;font-weight:bold;color:#fff;">-</span>
<span class="t ttl" id="t8" style="left:315.5px;top:11px;font-size:13px;font-weight:bold;color:#fff;transform:scaleX(0.913);transform-origin:0 0;">MAX6</span>
<span class="t ttl" id="t9" style="left:354.3px;top:11px;font-size:13px;font-weight:bold;color:#fff;">(</span>
<span class="t ttl" id="t10" style="left:361.5px;top:11px;font-size:13px;font-weight:bold;color:#fff;transform:scaleX(0.918);transform-origin:0 0;">COM3</span>
<span class="t ttl" id="t11" style="left:401.1px;top:11px;font-size:13px;font-weight:bold;color:#fff;">:</span>
<span class="t ttl" id="t12" style="left:414.0px;top:11px;font-size:13px;font-weight:bold;color:#fff;letter-spacing:0.04px;">Hardware</span>
<span class="t ttl" id="t13" style="left:478.3px;top:11px;font-size:13px;font-weight:bold;color:#fff;">)</span>
<span class="t" id="t14" style="left:9.5px;top:34px;transform:scaleX(0.891);transform-origin:0 0;">Plik</span>
<span class="t" id="t15" style="left:37.0px;top:34px;letter-spacing:-0.11px;">Tryb pomiarów</span>
<span class="t" id="t16" style="left:119.5px;top:34px;letter-spacing:-0.56px;">Pasma</span>
<span class="t" id="t17" style="left:162.0px;top:34px;letter-spacing:-0.16px;">Opcje śledzenia</span>
<span class="t" id="t18" style="left:249.5px;top:34px;letter-spacing:-0.11px;">Konfiguracja</span>
<span class="t" id="t19" style="left:321.0px;top:34px;letter-spacing:-0.16px;">O programie</span>
<span class="t" id="t20" style="left:45.5px;top:66px;letter-spacing:-0.42px;">x pomiarów</span>
<span class="t" id="t21" style="left:51.5px;top:98px;letter-spacing:-0.43px;">1 Pomiar</span>
<span class="t" id="t22" style="left:34.0px;top:124px;letter-spacing:-0.47px;">Pomiar</span>
<span class="t" id="t23" style="left:23.1px;top:145px;letter-spacing:-0.34px;">Częstotliwość :</span>
<span class="t" id="t24" style="left:14.3px;top:166px;letter-spacing:-0.05px;">od</span>
<span class="t" id="t25" style="left:32.4px;top:166px;font-size:12px;">1</span>
<span class="t" id="t26" style="left:85.5px;top:166px;letter-spacing:-0.30px;">MHz</span>
<span class="t" id="t27" style="left:14.3px;top:194px;letter-spacing:-0.05px;">do</span>
<span class="t" id="t28" style="left:33.0px;top:194px;font-size:12px;letter-spacing:-0.86px;">10</span>
<span class="t" id="t29" style="left:85.5px;top:194px;letter-spacing:-0.30px;">MHz</span>
<span class="t zb" id="t30" style="left:26.1px;top:220px;letter-spacing:0.26px;">Zoom M1/M2</span>
<span class="t dis" id="t31" style="left:40.1px;top:238px;color:#ACA899;letter-spacing:-0.07px;">unZoom</span>
<span class="t" id="t32" style="left:20.2px;top:257px;letter-spacing:0.02px;">Krok</span>
<span class="t" id="t33" style="left:41.0px;top:274px;letter-spacing:0.17px;">500</span>
<span class="t serif" id="t34" style="left:15.9px;top:296px;font-size:10px;font-weight:bold;transform:scaleX(0.910);transform-origin:0 0;">(Step : 18000 Hz)</span>
<span class="t" id="t35" style="left:22.8px;top:316px;letter-spacing:-0.27px;">Graficznie :</span>
<span class="t" id="t36" style="left:37.8px;top:333px;letter-spacing:0.21px;">SWR</span>
<span class="t" id="t37" style="left:37.8px;top:350px;letter-spacing:-0.11px;">| Z |</span>
<span class="t" id="t38" style="left:37.8px;top:370px;letter-spacing:-0.06px;">R.L.</span>
<span class="t" id="t39" style="left:37.8px;top:390px;letter-spacing:-0.15px;">Phase</span>
<span class="t" id="t40" style="left:37.8px;top:410px;letter-spacing:-0.05px;">R.s.</span>
<span class="t" id="t41" style="left:37.8px;top:430px;letter-spacing:-0.30px;">| XS |</span>
<span class="t" id="t42" style="left:23.0px;top:468px;letter-spacing:-0.04px;">R.L. :</span>
<span class="t" id="t43" style="left:38.3px;top:485px;letter-spacing:-0.19px;">Skala 30dB</span>
<span class="t" id="t44" style="left:38.3px;top:501px;letter-spacing:-0.19px;">Skala 60dB</span>
<span class="t" id="t45" style="left:17.1px;top:523px;letter-spacing:-0.16px;">Offset RL</span>
<span class="t" id="t46" style="left:71.4px;top:524px;">0</span>
<span class="t" id="t47" style="left:124.5px;top:59px;font-weight:bold;color:#d00000;transform:scaleX(1.096);transform-origin:0 0;">Pomiar ANTENY - SWR</span>
<span class="t" id="t48" style="left:274.0px;top:59px;font-weight:bold;color:#d00000;letter-spacing:0.33px;">- MAX</span>
<span class="t" id="t49" style="left:318.0px;top:59px;letter-spacing:0.02px;">Swr</span>
<span class="t" id="t50" style="left:360.0px;top:59px;letter-spacing:-0.26px;">| Z |</span>
<span class="t" id="t51" style="left:398.5px;top:59px;letter-spacing:-0.40px;">R.L.</span>
<span class="t" id="t52" style="left:433.0px;top:59px;letter-spacing:-0.18px;">Phase</span>
<span class="t" id="t53" style="left:480.5px;top:59px;letter-spacing:-0.45px;">Rs</span>
<span class="t" id="t54" style="left:510.5px;top:59px;letter-spacing:-0.23px;">| Xs |</span>
<span class="t" id="t55" style="left:535.5px;top:59px;letter-spacing:-0.38px;">+j</span>
<span class="t" id="t56" style="left:548.5px;top:59px;letter-spacing:-0.27px;">Xl to µH</span>
<span class="t" id="t57" style="left:592.5px;top:59px;transform:scaleX(0.929);transform-origin:0 0;">DUŻ</span>
<span class="t" id="t58" style="left:614.1px;top:62px;font-size:8px;">Y</span>
<span class="t" id="t59" style="left:142.2px;top:79px;letter-spacing:-0.34px;">Marker 1</span>
<span class="t" id="t60" style="left:239.0px;top:79px;letter-spacing:-0.23px;">2.746000</span>
<span class="t" id="t61" style="left:311.0px;top:79px;letter-spacing:-0.24px;">9.82</span>
<span class="t" id="t62" style="left:351.0px;top:79px;letter-spacing:-0.23px;">50.23</span>
<span class="t" id="t63" style="left:391.0px;top:79px;letter-spacing:-0.24px;">1.78</span>
<span class="t" id="t64" style="left:431.0px;top:79px;letter-spacing:-0.23px;">89.74</span>
<span class="t" id="t65" style="left:471.0px;top:79px;letter-spacing:-0.23px;">10.13</span>
<span class="t" id="t66" style="left:511.0px;top:79px;letter-spacing:-0.23px;">49.19</span>
<span class="t" id="t67" style="left:551.0px;top:79px;letter-spacing:-0.24px;">2.83</span>
<span class="t" id="t68" style="left:142.2px;top:103px;letter-spacing:-0.34px;">Marker 2</span>
<span class="t" id="t69" style="left:239.0px;top:103px;letter-spacing:-0.23px;">5.086000</span>
<span class="t" id="t70" style="left:311.0px;top:103px;letter-spacing:-0.24px;">7.22</span>
<span class="t" id="t71" style="left:351.0px;top:103px;letter-spacing:-0.23px;">124.05</span>
<span class="t" id="t72" style="left:391.0px;top:103px;letter-spacing:-0.24px;">2.42</span>
<span class="t" id="t73" style="left:431.0px;top:103px;letter-spacing:-0.23px;">41.52</span>
<span class="t" id="t74" style="left:471.0px;top:103px;letter-spacing:-0.23px;">48.60</span>
<span class="t" id="t75" style="left:511.0px;top:103px;letter-spacing:-0.07px;">114.14</span>
<span class="t" id="t76" style="left:551.0px;top:103px;letter-spacing:-0.24px;">3.17</span>
<span class="t" id="t77" style="left:142.2px;top:127px;letter-spacing:-0.19px;">SWR Minimu</span>
<span class="t" id="t78" style="left:635.5px;top:68px;letter-spacing:-0.16px;">Delta marker 1 al 2</span>
<span class="t" id="t79" style="left:622.3px;top:91px;letter-spacing:-0.23px;">Szerokośc pasma</span>
<span class="t" id="t80" style="left:747.7px;top:91px;">Q</span>
<span class="t" id="t81" style="left:625.0px;top:111px;letter-spacing:-0.05px;">2 340 000</span>
<span class="t" id="t82" style="left:710.0px;top:111px;letter-spacing:0.05px;">Hz</span>
<span class="t" id="t83" style="left:733.2px;top:111px;letter-spacing:-0.04px;">1.67</span>
<span class="t" id="t84" style="left:277.0px;top:174px;color:#c00000;letter-spacing:-0.78px;">M1</span>
<span class="t" id="t85" style="left:426.2px;top:174px;color:#007000;letter-spacing:0.52px;">M2</span>
<span class="t" id="t86" style="left:386.1px;top:154px;letter-spacing:-0.09px;">Legenda :</span>
<span class="t" id="t87" style="left:461.5px;top:154px;color:#d00000;letter-spacing:0.16px;">SWR</span>
<span class="t" id="t88" style="left:491.0px;top:154px;color:#008000;letter-spacing:-0.26px;">| Z |</span>
<span class="t" id="t89" style="left:516.0px;top:154px;color:#000090;letter-spacing:-0.23px;">R.L.</span>
<span class="t" id="t90" style="left:541.5px;top:154px;color:#e000e0;letter-spacing:-0.30px;">Phase</span>
<span class="t" id="t91" style="left:576.5px;top:154px;color:#808080;letter-spacing:-0.45px;">Rs</span>
<span class="t" id="t92" style="left:596.0px;top:154px;color:#008080;letter-spacing:-0.33px;">| Xs |</span>
<span class="t" id="t93" style="left:625.5px;top:154px;color:#808080;letter-spacing:-0.17px;">(X,R,Z = Ohms.)</span>
<span class="t" id="t94" style="left:736.0px;top:154px;color:#e000e0;letter-spacing:-0.01px;">Ph.</span>
<span class="t" id="t95" style="left:759.8px;top:154px;color:#808080;">X</span>
<span class="t" id="t96" style="left:737.5px;top:169px;color:#d810d8;letter-spacing:-0.26px;">180°</span>
<span class="t" id="t97" style="left:761.0px;top:169px;color:#808080;letter-spacing:0.32px;">500</span>
<span class="t" id="t98" style="left:737.5px;top:254px;color:#d810d8;letter-spacing:-0.26px;">135°</span>
<span class="t" id="t99" style="left:761.0px;top:254px;color:#808080;letter-spacing:0.32px;">375</span>
<span class="t" id="t100" style="left:738.5px;top:341px;color:#d810d8;letter-spacing:-0.17px;">90°</span>
<span class="t" id="t101" style="left:761.0px;top:341px;color:#808080;letter-spacing:0.32px;">250</span>
<span class="t" id="t102" style="left:738.5px;top:429px;color:#d810d8;letter-spacing:-0.17px;">45°</span>
<span class="t" id="t103" style="left:761.0px;top:429px;color:#808080;letter-spacing:0.32px;">125</span>
<span class="t" id="t104" style="left:738.5px;top:511px;color:#d810d8;letter-spacing:0.47px;">0°</span>
<span class="t" id="t105" style="left:761.7px;top:511px;color:#808080;">0</span>
<span class="t" id="t106" style="left:136.5px;top:526px;letter-spacing:-0.12px;">1.000Mhz</span>
<span class="t" id="t107" style="left:232.0px;top:526px;letter-spacing:-0.12px;">2.512Mhz</span>
<span class="t" id="t108" style="left:327.0px;top:526px;letter-spacing:-0.04px;">4.006Mhz</span>
<span class="t" id="t109" style="left:423.0px;top:526px;letter-spacing:-0.12px;">5.500Mhz</span>
<span class="t" id="t110" style="left:519.5px;top:526px;letter-spacing:-0.04px;">7.012Mhz</span>
<span class="t" id="t111" style="left:614.5px;top:526px;letter-spacing:-0.19px;">8.524Mhz</span>
<span class="t" id="t112" style="left:706.5px;top:526px;letter-spacing:-0.05px;">10.000Mhz</span>
<span class="t" id="t113" style="left:124.0px;top:552px;font-size:13px;font-weight:bold;letter-spacing:-0.46px;">1.100000 MHz</span>
<span class="t" id="t114" style="left:235.5px;top:552px;font-size:13px;font-weight:bold;letter-spacing:-0.39px;">Swr : 100</span>
<span class="t" id="t115" style="left:310.0px;top:552px;font-size:13px;font-weight:bold;">| Z | : 29.20</span>
<span class="t" id="t116" style="left:400.5px;top:552px;font-size:13px;font-weight:bold;letter-spacing:-0.24px;">R.L. : 0.00</span>
<span class="t" id="t117" style="left:490.5px;top:552px;font-size:13px;font-weight:bold;letter-spacing:-0.24px;">Phase : 101.70</span>
<span class="t" id="t118" style="left:595.5px;top:552px;font-size:13px;font-weight:bold;letter-spacing:-0.25px;">Rs : 2.55</span>
<span class="t" id="t119" style="left:695.5px;top:552px;font-size:13px;font-weight:bold;letter-spacing:0.12px;">| Xs | : 28.07</span>
<svg style="position:absolute;left:58px;top:75px;z-index:50" width="16" height="24" viewBox="0 0 16 24">
<path d="M1.5 1.5 L1.5 17.2 L5 13.8 L8 20.8 L10.7 19.7 L7.7 12.8 L12.5 12.8 Z" fill="#fff" stroke="#000" stroke-width="1.1" stroke-linejoin="miter"/>
</svg>
<div id="task"></div>
<div class="" style="left:0px;top:555px;width:4px;height:15px;background:linear-gradient(#4ca850,#369a3c 30%,#2a8a30);"></div>
<div class="" style="left:15px;top:558px;width:160px;height:14px;background:#1e52b8;border-radius:3px 3px 0 0;box-shadow:inset 1px 1px 1px #15347e;"></div>
<svg style="position:absolute;left:26px;top:563px" width="16" height="8" viewBox="0 0 16 8">
<rect x="0" y="0" width="16" height="16" fill="#d8f0c8"/><rect x="1" y="1" width="14" height="14" fill="#0a8a0a"/>
<path d="M3.5 1V8M6.5 1V8M9.5 1V8M12.5 1V8M1 3.5H15M1 6.5H15" stroke="#044a04" stroke-width="1" fill="none"/>
<path d="M1.5 2 C4 2.5 6 4 8 7" stroke="#7a3a10" stroke-width="1.6" fill="none"/></svg>
<div class="" style="left:177px;top:558px;width:157px;height:14px;background:linear-gradient(#5c98f8,#3c80f0 40%);border-radius:3px 3px 0 0;"></div>
<svg style="position:absolute;left:185px;top:563px" width="16" height="8" viewBox="0 0 16 8">
<rect x="0" y="0" width="16" height="8" fill="#fff"/><path d="M2 8 L4 2 L7 5 L9 1 L11 5 L14 3 L13 8 Z" fill="#d81010"/></svg>
<div class="" style="left:730px;top:555px;width:70px;height:15px;background:linear-gradient(#3cb4f4,#18a0ee 25%,#1496e8);border-left:1px solid #0c5cb8;box-sizing:border-box;"></div>
<svg style="position:absolute;left:720px;top:560px" width="80" height="10" viewBox="0 0 80 10">
<circle cx="10" cy="10" r="8" fill="#3c8cf0" stroke="#a8d0ff" stroke-width="1.2"/>
<path d="M12 5 L8 9.5 L9.5 10 L13.5 6 Z" fill="#fff"/>
<path d="M21 10 L26 2 L33 10 Z" fill="#e8a020"/><path d="M26 4 L29.5 10 L24 10 Z" fill="#303030"/>
<path d="M41 4 L46.5 2 L52 4 L52 10 L41 10 Z" fill="#d82020"/><path d="M44 6 L49 10 M49 6 L44 10" stroke="#fff" stroke-width="1.6"/>
<rect x="58" y="5" width="9" height="5" fill="#38386c"/>
<path d="M69 4 Q72 7 69.5 10 M71.5 2.5 Q75.5 7 72 10" stroke="#e8e8f8" stroke-width="1.3" fill="none"/>
<rect x="76" y="3" width="4" height="7" fill="#4a9a30"/>
</svg>
<span class="t" id="t120" style="left:45.5px;top:565px;color:#fff;transform:scaleX(0.887);transform-origin:0 0;">IG miniVNA</span>
<span class="t" id="t121" style="left:204.5px;top:565px;color:#fff;letter-spacing:-0.33px;">IrfanView</span>
</div></body></html>
